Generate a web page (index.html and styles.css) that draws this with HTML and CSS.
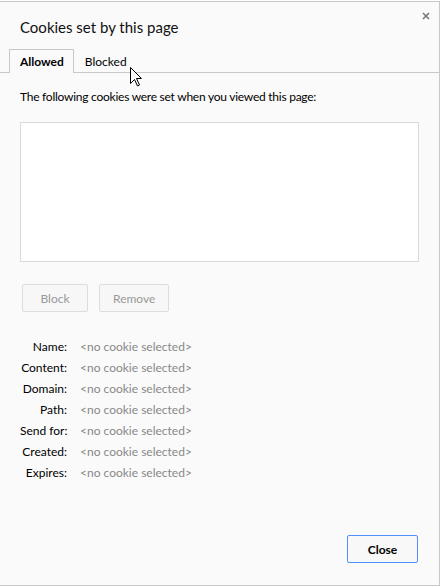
FILE: index.html
```html
<!DOCTYPE html>
<html lang="en">
<head>
  <meta charset="UTF-8" />
  <title>Cookies set by this page</title>
  <link rel="stylesheet" href="styles.css">
</head>
<body>
  <div class="dialog">
    <div class="header">
      <h1 class="title">Cookies set by this page</h1>
      <button class="close-x" aria-label="Close">
        <svg width="8" height="8" viewBox="0 0 8 8">
          <path d="M1 1 L7 7 M7 1 L1 7" stroke="#777" stroke-width="1.6" />
        </svg>
      </button>
    </div>

    <div class="tabs">
      <div class="tab active">Allowed</div>
      <div class="tab">Blocked</div>
    </div>

    <div class="content">
      <p class="intro">The following cookies were set when you viewed this page:</p>
      <div class="cookie-list"></div>

      <div class="actions">
        <button class="btn" disabled>Block</button>
        <button class="btn" disabled>Remove</button>
      </div>

      <div class="details">
        <div class="label">Name:</div><div class="value">&lt;no cookie selected&gt;</div>
        <div class="label">Content:</div><div class="value">&lt;no cookie selected&gt;</div>
        <div class="label">Domain:</div><div class="value">&lt;no cookie selected&gt;</div>
        <div class="label">Path:</div><div class="value">&lt;no cookie selected&gt;</div>
        <div class="label">Send for:</div><div class="value">&lt;no cookie selected&gt;</div>
        <div class="label">Created:</div><div class="value">&lt;no cookie selected&gt;</div>
        <div class="label">Expires:</div><div class="value">&lt;no cookie selected&gt;</div>
      </div>
    </div>

    <div class="footer">
      <button class="btn primary">Close</button>
    </div>

    <!-- mouse pointer hovering the Blocked tab -->
    <svg class="cursor" width="13" height="20" viewBox="0 0 13 20">
      <path d="M0.5 0.5 L0.5 16.5 L4.5 12.5 L7.5 19 L9.5 18 L6.5 11.5 L11.5 11.5 Z" fill="#fff" stroke="#000" stroke-width="1" />
    </svg>
  </div>
</body>
</html>
```

FILE: styles.css
```css
body {
  margin: 0;
  background: #fff;
  font-family: Lato, "Open Sans", sans-serif;
  font-size: 12px;
  color: #000;
}
.dialog {
  position: relative;
  box-sizing: border-box;
  width: 441px;
  height: 585px;
  margin: 1px 0 0 -1px;
  background: #fafafa;
  border: 1px solid #c8c8c8;
  display: flex;
  flex-direction: column;
}
.header {
  display: flex;
  justify-content: space-between;
  align-items: flex-start;
  padding: 0 7px 0 20px;
  height: 47px;
}
.title {
  margin: 16px 0 0;
  font-size: 15px;
  font-weight: normal;
  color: #111;
}
.close-x {
  margin-top: 8px;
  padding: 2px;
  border: none;
  background: none;
  line-height: 0;
}
.tabs {
  display: flex;
  padding-left: 9px;
  border-bottom: 1px solid #c8c8c8;
  height: 23px;
}
.tab {
  padding: 0 9px 0 10px;
  line-height: 23px;
  border: 1px solid transparent;
  border-bottom: none;
}
.tab.active {
  font-weight: bold;
  background: #fafafa;
  border-color: #c8c8c8;
  margin-bottom: -1px;
  height: 23px;
}
.content {
  flex: 1;
  padding: 0 20px;
}
.intro {
  margin: 15px 0 0;
  line-height: 17px;
  letter-spacing: -0.25px;
}
.cookie-list {
  margin-top: 17px;
  height: 138px;
  background: #fff;
  border: 1px solid #d9d9d9;
}
.actions {
  display: flex;
  gap: 11px;
  margin: 22px 0 0 2px;
}
.btn {
  font-family: inherit;
  font-size: 12px;
  height: 28px;
  min-width: 66px;
  padding: 0 13px;
  border: 1px solid #ddd;
  border-radius: 2px;
  background: #f7f7f7;
  color: #999;
}
.details {
  display: grid;
  grid-template-columns: 47px auto;
  column-gap: 13px;
  row-gap: 4px;
  margin-top: 26px;
  line-height: 17px;
}
.label {
  text-align: right;
  white-space: nowrap;
}
.value {
  color: #888;
}
.footer {
  display: flex;
  justify-content: flex-end;
  padding: 0 21px 22px 0;
}
.btn.primary {
  width: 71px;
  padding: 0;
  border-color: #4d90fe;
  background: #f8f8f8;
  color: #000;
  font-weight: bold;
}
.cursor {
  position: absolute;
  left: 130px;
  top: 65px;
}
```
